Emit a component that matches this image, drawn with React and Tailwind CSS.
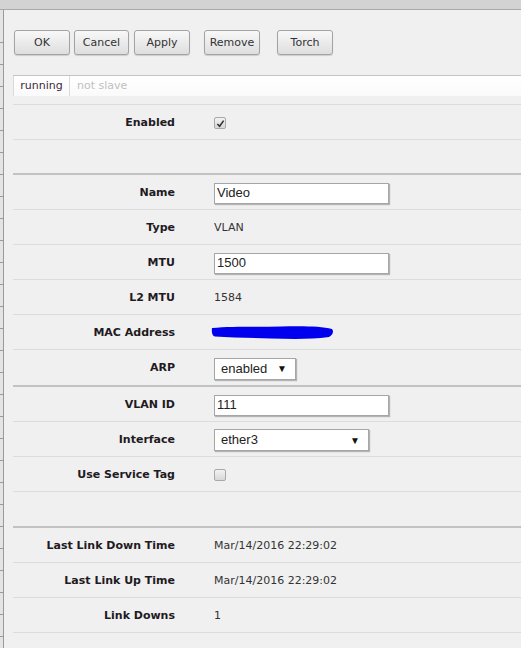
import React from 'react';

const ticks = Array.from({ length: 30 });

function Button({ children, className = '' }) {
  return (
    <button
      className={
        'h-[25px] pt-[2px] rounded-[3px] border border-[#a3a3a3] bg-gradient-to-b from-[#f8f8f8] to-[#dedede] shadow-[0_1px_1px_rgba(0,0,0,0.15)] text-[11px] text-[#333] ' +
        className
      }
    >
      {children}
    </button>
  );
}

function Row({ label, children, section = false, height = 'h-[35px]' }) {
  return (
    <div
      className={
        'flex items-center pt-[2px] ' +
        height +
        ' ' +
        (section
          ? 'border-b-2 border-[#c2c2c2]'
          : 'border-b border-[#dcdcdc]')
      }
    >
      <div className="w-[162px] text-right text-[11px] font-bold text-[#221a22]">
        {label}
      </div>
      <div className="ml-[39px] flex items-center text-[11px] text-[#333]">
        {children}
      </div>
    </div>
  );
}

function TextInput({ value, width = 'w-[175px]' }) {
  return (
    <div
      className={
        'h-[21px] flex items-center pl-[2px] bg-white border border-[#a6a6a6] shadow-[1px_1px_1px_rgba(0,0,0,0.25)] font-["Liberation_Sans",Arial,sans-serif] text-[13px] text-[#222] ' +
        width
      }
    >
      {value}
    </div>
  );
}

function Select({ value, width }) {
  return (
    <div
      className={
        'h-[22px] flex items-center justify-between pl-[6px] pr-[8px] bg-white border border-[#a6a6a6] shadow-[1px_1px_1px_rgba(0,0,0,0.25)] font-["Liberation_Sans",Arial,sans-serif] text-[13px] text-[#222] ' +
        width
      }
    >
      <span>{value}</span>
      <span className="text-[10px] text-[#111]">▼</span>
    </div>
  );
}

function Checkbox({ checked }) {
  return (
    <div className="w-[12px] h-[12px] rounded-[2px] border border-[#a9a9a9] bg-gradient-to-b from-[#f2f2f2] to-[#d8d8d8] flex items-center justify-center">
      {checked && (
        <svg width="9" height="9" viewBox="0 0 10 10">
          <path d="M1.5 5.5 L4 8 L8.5 1.8" fill="none" stroke="#333" strokeWidth="1.8" />
        </svg>
      )}
    </div>
  );
}

export default function App() {
  return (
    <div className="w-[521px] h-[648px] overflow-hidden flex flex-col bg-[#f0f0f0] font-['DejaVu_Sans',Verdana,sans-serif]">
      <div className="h-[10px] shrink-0 bg-[#d3d3d3] border-b border-[#a9a9a9]" />
      <div className="flex flex-1">
        {/* edge of the side list */}
        <div className="w-[4px] shrink-0 bg-[#e4e4e4] border-r border-[#9a9a9a] flex flex-col pt-[11px]">
          {ticks.map((_, i) => (
            <div key={i} className="h-[22px] shrink-0 border-b border-[#9a9a9a]" />
          ))}
        </div>

        <div className="flex-1 pl-[9px]">
          <div className="flex pt-[20px] pl-[1px]">
            <Button className="w-[56px]">OK</Button>
            <Button className="ml-[4px] w-[55px]">Cancel</Button>
            <Button className="ml-[5px] w-[56px]">Apply</Button>
            <Button className="ml-[14px] w-[56px]">Remove</Button>
            <Button className="ml-[17px] w-[56px]">Torch</Button>
          </div>

          <div className="mt-[20px] h-[21px] flex items-stretch border-t border-[#c4c4c4] bg-gradient-to-b from-white to-[#fafafa] text-[11px]">
            <div className="w-[57px] flex items-center justify-center border-l border-r border-[#dadada] text-[#3a2a3a]">
              running
            </div>
            <div className="flex items-center pl-[7px] text-[#c0c0c0]">not slave</div>
          </div>

          <div className="mt-[8px] border-t border-[#dcdcdc]">
            <Row label="Enabled">
              <Checkbox checked />
            </Row>
            <Row label="" section />
            <Row label="Name">
              <TextInput value="Video" />
            </Row>
            <Row label="Type">VLAN</Row>
            <Row label="MTU">
              <TextInput value="1500" />
            </Row>
            <Row label="L2 MTU">1584</Row>
            <Row label="MAC Address">
              <svg width="124" height="16" viewBox="0 0 124 16" className="-ml-[3px]">
                <path
                  d="M1 3 C20 1 45 2 70 1.5 C90 1 110 1 121 4 C123 6 122 10 118 12 C100 14.5 80 14 60 13.5 C40 13 20 12.5 4 11.5 C1 11 0.5 6 1 3 Z"
                  fill="#0000ee"
                />
              </svg>
            </Row>
            <Row label="ARP" section height="h-[37px]">
              <Select value="enabled" width="w-[82px]" />
            </Row>
            <Row label="VLAN ID">
              <TextInput value="111" />
            </Row>
            <Row label="Interface">
              <Select value="ether3" width="w-[155px]" />
            </Row>
            <Row label="Use Service Tag">
              <Checkbox />
            </Row>
            <Row label="" section height="h-[36px]" />
            <Row label="Last Link Down Time">Mar/14/2016 22:29:02</Row>
            <Row label="Last Link Up Time">Mar/14/2016 22:29:02</Row>
            <Row label="Link Downs">1</Row>
          </div>
        </div>
      </div>
    </div>
  );
}
